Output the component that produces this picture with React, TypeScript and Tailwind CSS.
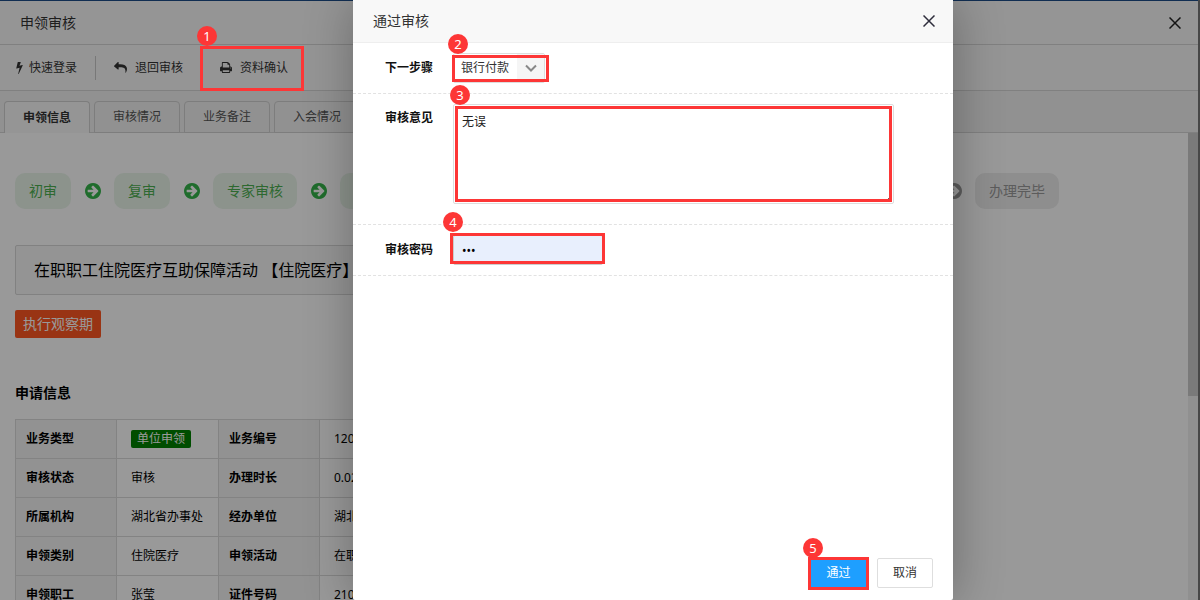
import type { ReactNode } from "react";

const StepArrow = ({ className }: { className: string }) => (
  <svg viewBox="0 0 1536 1536" className={"size-4 shrink-0 " + className} fill="currentColor" aria-hidden="true">
    <path d="M1285 768q0-27-18-45L905 361l-91-91q-18-18-45-18t-45 18l-91 91q-18 18-18 45t18 45l189 189H320q-26 0-45 19t-19 45v128q0 26 19 45t45 19h502l-189 189q-19 19-19 45t19 45l91 91q18 18 45 18t45-18l362-362 91-91q18-18 18-45zm251 0q0 209-103 385.500T1153.500 1433 768 1536t-385.500-103T103 1153.500 0 768t103-385.500T382.500 103 768 0t385.500 103T1433 382.500 1536 768z" fillRule="evenodd" />
  </svg>
);

const Bolt = () => (
  <svg viewBox="0 0 896 1664" className="h-3 w-[7px]" fill="currentColor" aria-hidden="true">
    <path d="M885 438q18 20 7 44l-540 1157q-13 25-42 25-4 0-14-2-17-5-25.500-19t-4.500-30l197-808-406 101q-4 1-12 1-18 0-31-11-18-15-13-39L202 32q4-14 16-23t28-9h328q19 0 32 12.500t13 29.500q0 8-5 18L443 523l396-98q8-2 12-2 19 0 34 15z" />
  </svg>
);

const Reply = () => (
  <svg viewBox="0 0 1792 1408" className="h-[11px] w-[13px]" fill="currentColor" aria-hidden="true">
    <path d="M1792 896q0 166-127 451-3 7-10.500 24t-13.500 30-13 22q-12 17-28 17-15 0-23.500-10t-8.500-25q0-9 2.500-26.500t2.500-23.500q5-68 5-123 0-101-17.500-181t-48.500-138.500-80-101-105.500-69.500-133-42.500-154-21.500-175.500-6H640v256q0 26-19 45t-45 19-45-19L19 557Q0 538 0 512t19-45L531-45q19-19 45-19t45 19 19 45v256h224q713 0 875 403 53 134 53 237z" />
  </svg>
);

const Printer = () => (
  <svg viewBox="0 0 1664 1536" className="h-[11px] w-3" fill="currentColor" aria-hidden="true">
    <path fillRule="evenodd" d="M384 1408h896v-256H384v256zm0-640h896V384h-160q-40 0-68-28t-28-68V128H384v640zm1152 64q0-26-19-45t-45-19-45 19-19 45 19 45 45 19 45-19 19-45zm128 0v416q0 13-9.500 22.500t-22.500 9.500h-224v160q0 40-28 68t-68 28H352q-40 0-68-28t-28-68v-160H32q-13 0-22.500-9.500T0 1248V832q0-79 56.500-135.500T192 640h64V96q0-40 28-68t68-28h672q40 0 88 20t76 48l152 152q28 28 48 76t20 88v256h64q79 0 135.500 56.500T1664 832z" />
  </svg>
);

const Cross = () => (
  <svg viewBox="0 0 12 12" className="size-3" stroke="currentColor" strokeWidth="1.500" fill="none" aria-hidden="true">
    <path d="M.5.5l11 11M11.500.5L.5 11.500" />
  </svg>
);

function Marked({ n, box, dot, children }: { n: number; box: string; dot: string; children: ReactNode }) {
  return (
    <div className="relative">
      {children}
      <span className={"pointer-events-none absolute z-20 border-3 border-[#fd3636] " + box} />
      <span className={"absolute z-30 flex size-5 items-center justify-center rounded-full bg-[#fd3636] text-[13px] leading-none text-white " + dot}>
        {n}
      </span>
    </div>
  );
}

const tabs = ["申领信息", "审核情况", "业务备注", "入会情况"];

const steps = [
  { label: "初审", done: true },
  { label: "复审", done: true },
  { label: "专家审核", done: true },
  { label: "", done: true },
  { label: "", done: true },
  { label: "", done: false },
  { label: "", done: false },
  { label: "", done: false },
  { label: "办理完毕", done: false },
];

const rows = [
  ["业务类型", "单位申领", "业务编号", "120"],
  ["审核状态", "审核", "办理时长", "0.02"],
  ["所属机构", "湖北省办事处", "经办单位", "湖北"],
  ["申领类别", "住院医疗", "申领活动", "在职"],
  ["申领职工", "张莹", "证件号码", "210"],
];

function Workspace() {
  return (
    <div className="flex h-full flex-col border-t border-[#1d4e89] bg-white">
      <header className="flex h-11 shrink-0 items-center justify-between border-b border-[#d5d5d5] bg-[#f8f8f8] pr-[17px] pl-5 text-sm text-[#333]">
        <h1>申领审核</h1>
        <button type="button" aria-label="关闭" className="text-[#222]"><Cross /></button>
      </header>
      <nav className="flex h-[46px] shrink-0 items-center border-b border-[#d5d5d5] bg-[#f9f9f9] pl-4 text-xs text-[#333]">
        <button type="button" className="flex items-center gap-[6px] pr-[18px]"><Bolt />快速登录</button>
        <span className="h-6 w-px bg-[#c8c8c8]" />
        <button type="button" className="flex items-center gap-2 px-[18px]"><Reply />退回审核</button>
        <button type="button" className="flex items-center gap-2 px-[19px]"><Printer />资料确认</button>
      </nav>
      <div className="flex h-[42px] shrink-0 items-end gap-1 border-b border-[#d5d5d5] bg-[#f2f2f2] pl-1 text-xs">
        {tabs.map((t, i) => (
          <button
            key={t}
            type="button"
            className={
              i === 0
                ? "-mb-px h-8 w-[86px] rounded-t border border-b-0 border-[#d0d0d0] bg-[#f9f9f9] font-bold text-[#333]"
                : "-mb-px h-8 w-[86px] rounded-t border border-[#d0d0d0] text-[#555]"
            }
          >
            {t}
          </button>
        ))}
      </div>
      <div className="flex min-h-0 flex-1">
        <main className="min-w-0 flex-1 overflow-hidden px-[15px] pt-10">
          <ol className="flex items-center gap-[14px] text-sm">
            {steps.map((s, i) => (
              <li key={i} className="flex shrink-0 items-center gap-[13px]">
                {i > 0 && <StepArrow className={s.done ? "text-[#34b44a]" : "text-[#999]"} />}
                <span
                  className={
                    "flex h-9 items-center justify-center rounded-[10px] " +
                    (s.label.length === 2 ? "w-14 " : "w-21 ") +
                    (s.done ? "bg-[#e9f5ea] text-[#4caf50]" : "bg-[#ededed] text-[#999]")
                  }
                >
                  {s.label}
                </span>
              </li>
            ))}
          </ol>
          <div className="mt-9 w-3/4 rounded-xs border border-[#d8d8d8] bg-[#f7f7f7] px-[18px] py-3 text-base text-black">
            在职职工住院医疗互助保障活动 【住院医疗】
          </div>
          <span className="mt-[15px] inline-block rounded-xs bg-[#ff5722] px-2 py-1 text-sm text-white">执行观察期</span>
          <h2 className="mt-[45px] text-sm font-bold text-black">申请信息</h2>
          <table className="mt-4 w-3/4 table-fixed border-collapse text-left text-xs text-black">
            <colgroup>
              <col className="w-[101px]" />
              <col className="w-[102px]" />
              <col className="w-[101px]" />
              <col />
            </colgroup>
            <tbody>
              {rows.map((r, i) => (
                <tr key={r[0]} className="h-[39px]">
                  <th scope="row" className="border border-[#dadada] bg-[#f4f4f4] px-[10px]">{r[0]}</th>
                  <td className="border border-[#dadada] px-[14px] whitespace-nowrap">
                    {i === 0 ? <span className="inline-block rounded-xs bg-[#008000] px-[6px] leading-[18px] text-white">{r[1]}</span> : r[1]}
                  </td>
                  <th scope="row" className="border border-[#dadada] bg-[#f4f4f4] px-[10px]">{r[2]}</th>
                  <td className="border border-[#dadada] px-[14px]">{r[3]}</td>
                </tr>
              ))}
            </tbody>
          </table>
        </main>
        <div className="w-[10px] shrink-0 bg-[#f1f1f1]">
          <div className="h-[263px] bg-[#cbcbcb]" />
        </div>
      </div>
    </div>
  );
}

const labelClass = "w-20 shrink-0 text-right text-xs font-bold text-[#111]";

function ReviewDialog() {
  return (
    <form
      role="dialog"
      aria-label="通过审核"
      onSubmit={(e) => e.preventDefault()}
      className="relative flex h-full w-[600px] flex-col rounded-xs bg-white shadow-[1px_1px_50px_rgba(0,0,0,0.3)]"
    >
      <header className="flex h-[43px] shrink-0 items-center justify-between border-b border-[#eee] bg-[#f8f8f8] pr-[18px] pl-5 text-sm text-[#333]">
        <h2>通过审核</h2>
        <button type="button" aria-label="关闭" className="text-[#2e2d3c]"><Cross /></button>
      </header>
      <div className="flex h-[51px] items-center gap-5 border-b border-dashed border-[#e2e2e2]">
        <label htmlFor="next" className={labelClass}>下一步骤</label>
        <Marked n={2} box="top-[2px] -left-px h-[27px] w-[97px]" dot="-top-[19px] -left-[5px]">
          <div className="relative flex h-[30px] w-[92px] items-center justify-end rounded-xs border border-[#ddd] bg-white">
            <select id="next" className="absolute inset-0 appearance-none bg-transparent pl-[7px] text-xs text-[#333] outline-none">
              <option>银行付款</option>
            </select>
            <span className="flex h-full w-[27px] items-center justify-center bg-[#f5f5f5]">
              <svg viewBox="0 0 12 8" className="h-2 w-3" fill="none" stroke="#888" strokeWidth="2" aria-hidden="true">
                <path d="M1 1.500l5 5 5-5" />
              </svg>
            </span>
          </div>
        </Marked>
      </div>
      <div className="flex h-[131px] items-start gap-5 border-b border-dashed border-[#e2e2e2] pt-[10px]">
        <label htmlFor="opinion" className={labelClass + " pt-[6px]"}>审核意见</label>
        <Marked n={3} box="top-[2px] left-[2px] h-[96px] w-[437px]" dot="-top-[19px] -left-[3px]">
          <textarea
            id="opinion"
            defaultValue="无误"
            className="block h-[100px] w-[441px] rounded-xs border border-[#ddd] px-2 py-[9px] text-xs text-[#222] outline-none"
          />
        </Marked>
      </div>
      <div className="flex h-[51px] items-center gap-5 border-b border-dashed border-[#e2e2e2]">
        <label htmlFor="password" className={labelClass}>审核密码</label>
        <Marked n={4} box="-top-[2px] -left-[3px] h-[31px] w-[155px]" dot="-top-[23px] -left-[10px]">
          <input
            id="password"
            type="password"
            defaultValue="123"
            className="block h-[30px] w-[150px] rounded-xs border border-[#ccc] bg-[#e8effd] px-2 text-xs text-black outline-none"
          />
        </Marked>
      </div>
      <footer className="mt-auto flex justify-end gap-[10px] pr-5 pb-3">
        <Marked n={5} box="-top-px -left-[2px] h-[33px] w-[61px]" dot="-top-5 -left-[7px]">
          <button type="submit" className="block h-[30px] w-[57px] bg-[#1e9fff] text-xs text-white">通过</button>
        </Marked>
        <button type="button" className="h-[30px] w-14 rounded-xs border border-[#dedede] bg-white text-xs text-[#333]">取消</button>
      </footer>
    </form>
  );
}

export default function App() {
  return (
    <div className="relative h-screen overflow-hidden bg-white font-['Noto_Sans','Noto_Sans_CJK_SC',sans-serif]">
      <div className="h-full border-r-2 border-[#777]">
        <Workspace />
      </div>
      <div className="absolute inset-0 flex justify-center bg-black/40 pl-[106px]">
        <ReviewDialog />
      </div>
      <div className="pointer-events-none absolute top-[46px] left-[200px] h-[45px] w-[104px] border-3 border-[#fd3636]" />
      <span className="absolute top-[26px] left-[197px] flex size-5 items-center justify-center rounded-full bg-[#fd3636] text-[13px] leading-none text-white">1</span>
    </div>
  );
}
